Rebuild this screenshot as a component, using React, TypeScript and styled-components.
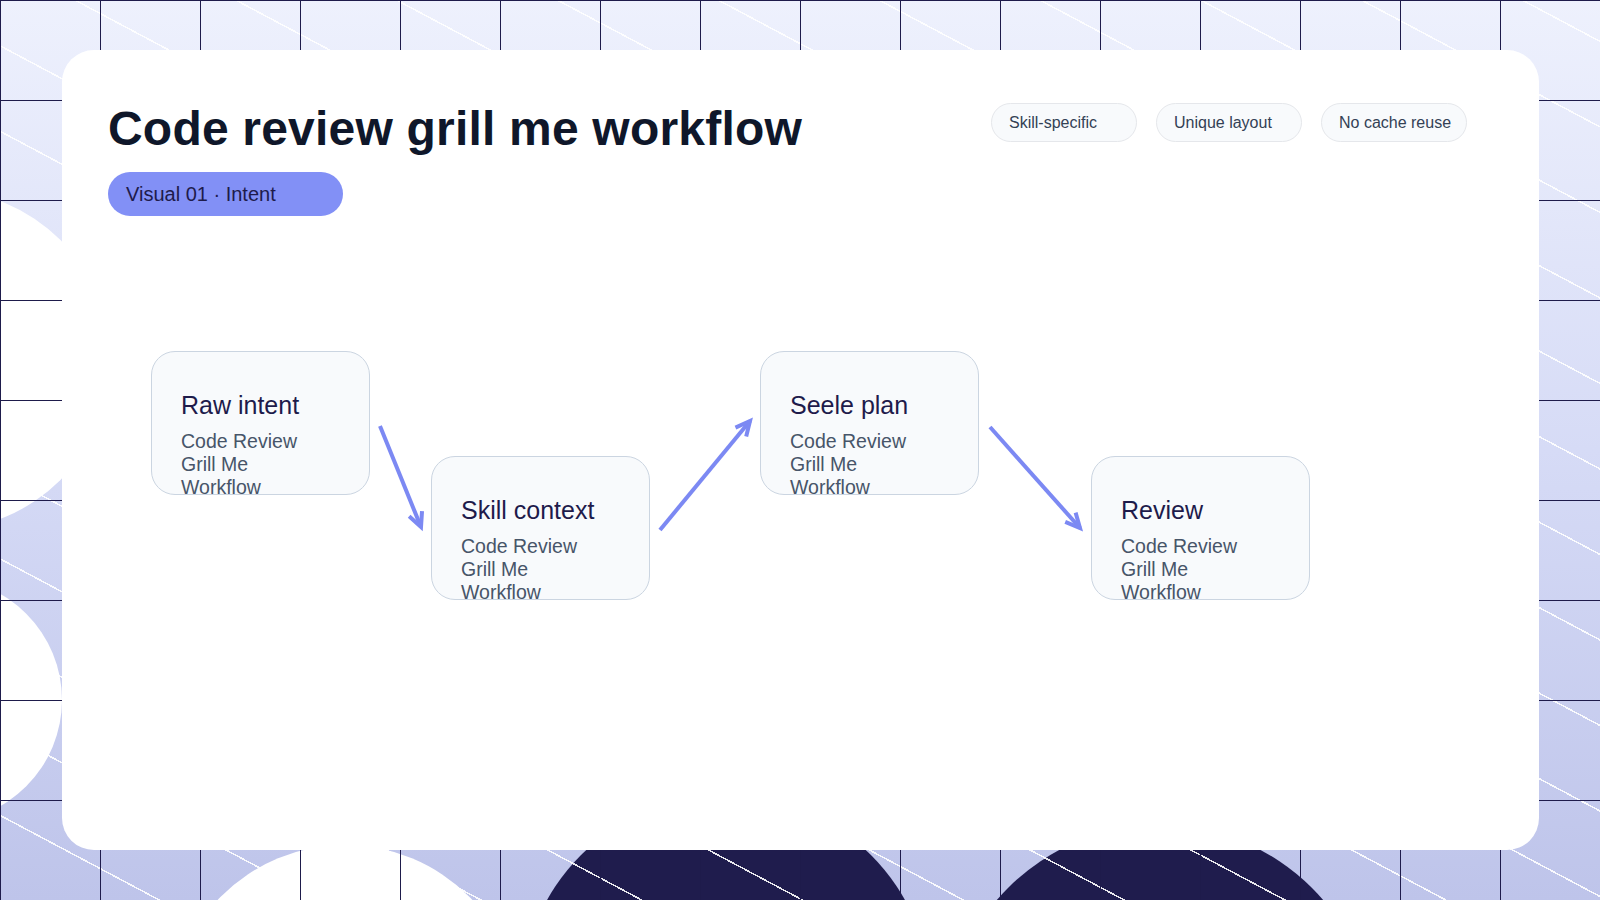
import React from "react";
import styled, { createGlobalStyle } from "styled-components";

const Global = createGlobalStyle`
  html, body { margin: 0; padding: 0; }
  body { font-family: "Liberation Sans", Arial, sans-serif; }
`;

const Stage = styled.div`
  position: relative;
  width: 1600px;
  height: 900px;
  overflow: hidden;
  background: linear-gradient(180deg, #eef1fd 0%, #d6dbf6 50%, #bec4ea 100%);
  padding: 50px 61px 50px 62px;
  box-sizing: border-box;
`;

const Diagonals = styled.div`
  position: absolute;
  inset: 0;
  background-image: repeating-linear-gradient(
    28deg,
    transparent 0px,
    transparent 74px,
    rgba(255, 255, 255, 0.9) 74px,
    rgba(255, 255, 255, 0.9) 75.5px
  );
`;

const Blob = styled.div<{ $x: number; $y: number; $r: number; $c: string }>`
  position: absolute;
  left: ${(p) => p.$x - p.$r}px;
  top: ${(p) => p.$y - p.$r}px;
  width: ${(p) => p.$r * 2}px;
  height: ${(p) => p.$r * 2}px;
  border-radius: 50%;
  background: ${(p) => p.$c};
`;

const Grid = styled.div`
  position: absolute;
  inset: 0;
  background-image: linear-gradient(90deg, #1e1b4b 1.5px, transparent 1.5px),
    linear-gradient(180deg, #1e1b4b 1.5px, transparent 1.5px);
  background-size: 100px 100px;
`;

const Card = styled.div`
  position: relative;
  z-index: 2;
  height: 800px;
  background: #ffffff;
  border-radius: 32px;
  padding: 50px 72px 0 46px;
  box-sizing: border-box;
`;

const Header = styled.div`
  display: flex;
  justify-content: space-between;
  align-items: flex-start;
`;

const TitleBlock = styled.div`
  display: flex;
  flex-direction: column;
  align-items: flex-start;
  gap: 14px;
`;

const Title = styled.h1`
  margin: 0;
  font-size: 48px;
  line-height: 58px;
  font-weight: 700;
  color: #0f172a;
  letter-spacing: 0.2px;
`;

const Pill = styled.div`
  width: 235px;
  height: 44px;
  border-radius: 22px;
  background: #8290f6;
  color: #1e1b4b;
  font-size: 20px;
  display: flex;
  align-items: center;
  padding-left: 18px;
  box-sizing: border-box;
`;

const Tags = styled.div`
  display: flex;
  gap: 19px;
  margin-top: 3px;
`;

const Tag = styled.div`
  width: 146px;
  height: 39px;
  border-radius: 20px;
  border: 1px solid #e5e7eb;
  background: #f8fafc;
  color: #334155;
  font-size: 16px;
  display: flex;
  align-items: center;
  padding-left: 17px;
  box-sizing: border-box;
`;

const Canvas = styled.div`
  position: absolute;
  inset: 0;
`;

const Node = styled.div<{ $x: number; $y: number }>`
  position: absolute;
  left: ${(p) => p.$x}px;
  top: ${(p) => p.$y}px;
  width: 219px;
  height: 144px;
  border: 1.5px solid #cbd5e1;
  border-radius: 24px;
  background: #f8fafc;
  box-sizing: border-box;
  padding: 38px 0 0 29px;
`;

const NodeTitle = styled.div`
  font-size: 25px;
  color: #1e1b4b;
  line-height: 30px;
  margin-bottom: 10px;
`;

const NodeText = styled.div`
  font-size: 19.5px;
  line-height: 23px;
  color: #475569;
`;

const Arrows = styled.svg`
  position: absolute;
  inset: 0;
  pointer-events: none;
`;

const nodes = [
  { t: "Raw intent", x: 89, y: 301 },
  { t: "Skill context", x: 369, y: 406 },
  { t: "Seele plan", x: 698, y: 301 },
  { t: "Review", x: 1029, y: 406 },
];

const arrows = [
  [318, 376, 359, 477],
  [598, 480, 688, 371],
  [928, 377, 1018, 478],
];

function Arrow({ a }: { a: number[] }) {
  const [x1, y1, x2, y2] = a;
  const ang = Math.atan2(y2 - y1, x2 - x1);
  const L = 16;
  const s = 0.45;
  const p1 = [x2 - L * Math.cos(ang - s), y2 - L * Math.sin(ang - s)];
  const p2 = [x2 - L * Math.cos(ang + s), y2 - L * Math.sin(ang + s)];
  return (
    <g stroke="#7c89f3" strokeWidth={4} fill="none" strokeLinecap="butt">
      <line x1={x1} y1={y1} x2={x2} y2={y2} />
      <polyline points={`${p1[0]},${p1[1]} ${x2},${y2} ${p2[0]},${p2[1]}`} />
    </g>
  );
}

export default function App() {
  return (
    <Stage>
      <Global />
      <Blob $x={-60} $y={360} $r={170} $c="#ffffff" />
      <Blob $x={-60} $y={700} $r={122} $c="#ffffff" />
      <Blob $x={345} $y={1020} $r={175} $c="#ffffff" />
      <Blob $x={726} $y={1000} $r={205} $c="#1f1c4d" />
      <Blob $x={1160} $y={1040} $r={215} $c="#1f1c4d" />
      <Diagonals />
      <Grid />
      <Card>
        <Header>
          <TitleBlock>
            <Title>Code review grill me workflow</Title>
            <Pill>Visual 01 · Intent</Pill>
          </TitleBlock>
          <Tags>
            <Tag>Skill-specific</Tag>
            <Tag>Unique layout</Tag>
            <Tag>No cache reuse</Tag>
          </Tags>
        </Header>
        <Canvas>
          {nodes.map((n) => (
            <Node key={n.t} $x={n.x} $y={n.y}>
              <NodeTitle>{n.t}</NodeTitle>
              <NodeText>
                Code Review
                <br />
                Grill Me
                <br />
                Workflow
              </NodeText>
            </Node>
          ))}
          <Arrows width="1477" height="800">
            {arrows.map((a, i) => (
              <Arrow key={i} a={a} />
            ))}
          </Arrows>
        </Canvas>
      </Card>
    </Stage>
  );
}
